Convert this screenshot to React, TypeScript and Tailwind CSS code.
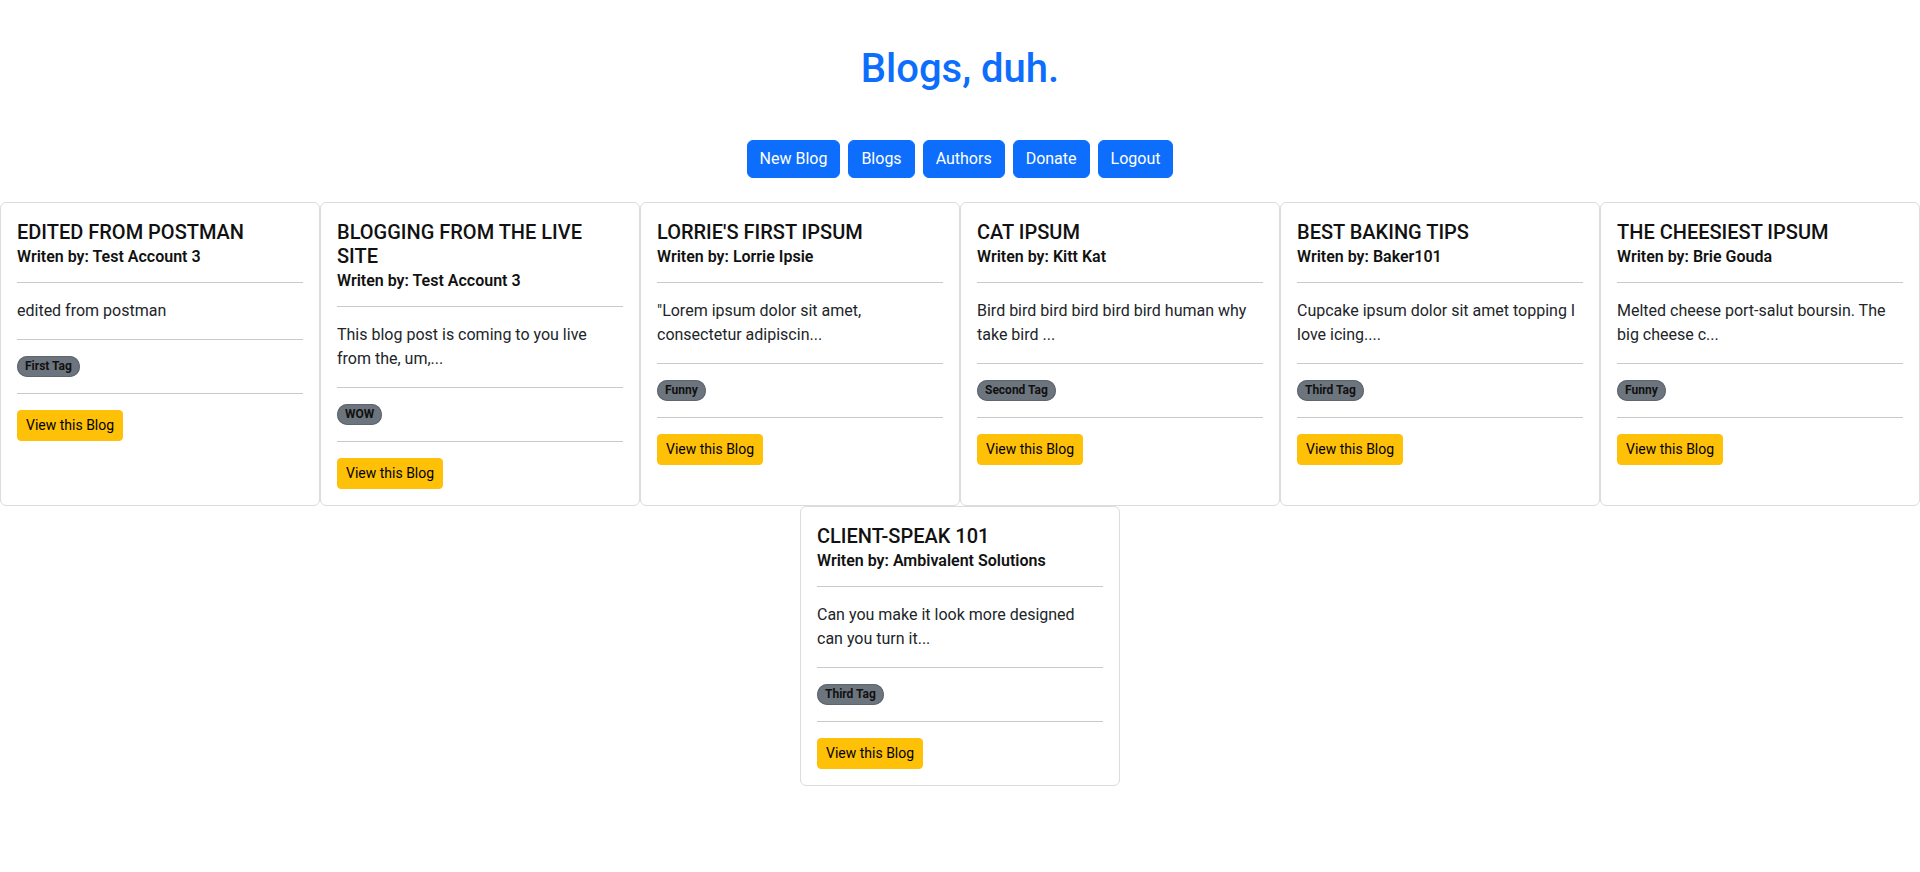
import React from "react";

type Blog = { title: string; author: string; body: string; tag: string };

const blogs: Blog[] = [
  { title: "EDITED FROM POSTMAN", author: "Test Account 3", body: "edited from postman", tag: "First Tag" },
  { title: "BLOGGING FROM THE LIVE SITE", author: "Test Account 3", body: "This blog post is coming to you live from the, um,...", tag: "WOW" },
  { title: "LORRIE'S FIRST IPSUM", author: "Lorrie Ipsie", body: "\"Lorem ipsum dolor sit amet, consectetur adipiscin...", tag: "Funny" },
  { title: "CAT IPSUM", author: "Kitt Kat", body: "Bird bird bird bird bird bird human why take bird ...", tag: "Second Tag" },
  { title: "BEST BAKING TIPS", author: "Baker101", body: "Cupcake ipsum dolor sit amet topping I love icing....", tag: "Third Tag" },
  { title: "THE CHEESIEST IPSUM", author: "Brie Gouda", body: "Melted cheese port-salut boursin. The big cheese c...", tag: "Funny" },
  { title: "CLIENT-SPEAK 101", author: "Ambivalent Solutions", body: "Can you make it look more designed can you turn it...", tag: "Third Tag" },
];

const navItems = ["New Blog", "Blogs", "Authors", "Donate", "Logout"];

function Card({ blog }: { blog: Blog }) {
  return (
    <div className="w-[320px] border border-[#dcdcdc] rounded-md bg-white flex flex-col p-4">
      <h5 className="text-[20px] font-medium leading-[1.2] mb-[7px] pt-px text-[#111]">{blog.title}</h5>
      <h6 className="text-base font-semibold leading-[1.2] -mt-1 text-[#111]">Writen by: {blog.author}</h6>
      <div className="h-px bg-[#c8c9ca] my-4" />
      <p className="text-base leading-6 text-[#212529]">{blog.body}</p>
      <div className="h-px bg-[#c8c9ca] my-4" />
      <div className="flex">
        <span className="inline-block rounded-full bg-[#6c757d] text-[#111] text-[12px] font-bold leading-none px-[8px] pt-[4px] pb-[5px] shadow-[inset_0_0_0_1px_#5f666d]">
          {blog.tag}
        </span>
      </div>
      <div className="h-px bg-[#c8c9ca] my-4" />
      <button className="self-start bg-[#ffc107] border border-[#ffc107] text-black text-sm leading-[1.5] px-2 py-1 rounded-[4px]">
        View this Blog
      </button>
    </div>
  );
}

export default function App() {
  return (
    <div className="min-h-screen bg-white font-['Roboto',sans-serif] text-[#212529]">
      <h1 className="pt-[45px] text-center text-[40px] font-medium leading-[1.2] text-[#0d6efd]">Blogs, duh.</h1>
      <nav className="mt-[47px] flex justify-center gap-2">
        {navItems.map((n) => (
          <button
            key={n}
            className="bg-[#0d6efd] border border-[#0d6efd] text-white text-base leading-6 px-3 py-1.5 rounded-md"
          >
            {n}
          </button>
        ))}
      </nav>
      <div className="mt-6 flex flex-wrap justify-center">
        {blogs.map((b) => (
          <Card key={b.title} blog={b} />
        ))}
      </div>
    </div>
  );
}
